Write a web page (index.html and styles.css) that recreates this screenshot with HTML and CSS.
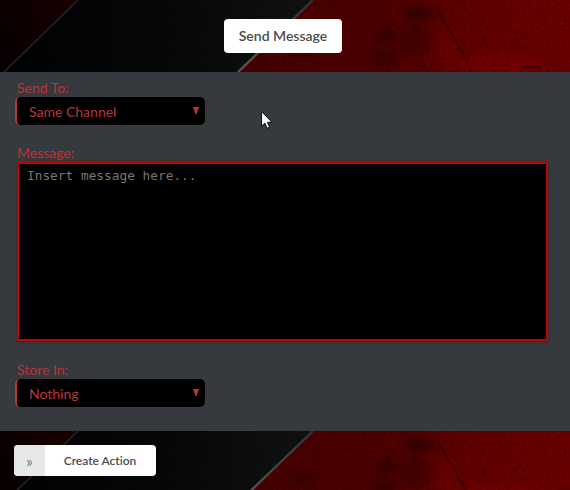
FILE: index.html
```html
<!DOCTYPE html>
<html lang="en">
<head>
<meta charset="utf-8">
<title>Send Message</title>
<link rel="stylesheet" href="styles.css">
</head>
<body>
<svg class="defs" aria-hidden="true">
  <defs>
    <linearGradient id="red" gradientUnits="userSpaceOnUse" x1="240" y1="0" x2="570" y2="30">
      <stop offset="0" stop-color="#460000"/><stop offset=".4" stop-color="#4e0000"/><stop offset=".75" stop-color="#640000"/><stop offset="1" stop-color="#6b0000"/>
    </linearGradient>
    <linearGradient id="dark" gradientUnits="userSpaceOnUse" x1="30" y1="0" x2="300" y2="0">
      <stop offset="0" stop-color="#020304"/><stop offset=".55" stop-color="#070808"/><stop offset="1" stop-color="#111"/>
    </linearGradient>
    <linearGradient id="maroon" gradientUnits="userSpaceOnUse" x1="0" y1="40" x2="70" y2="0">
      <stop offset="0" stop-color="#080000"/><stop offset="1" stop-color="#1b0000"/>
    </linearGradient>
    <linearGradient id="edge" x1="0" y1="1" x2="1" y2="0">
      <stop offset="0" stop-color="#555"/><stop offset="1" stop-color="#333"/>
    </linearGradient>
    <filter id="soft" x="-50%" y="-50%" width="200%" height="200%"><feGaussianBlur stdDeviation="3.5"/></filter>
    <filter id="grain" x="0" y="0" width="100%" height="100%">
      <feTurbulence type="fractalNoise" baseFrequency=".3" numOctaves="3" seed="8"/>
      <feColorMatrix values="0 0 0 0 0  0 0 0 0 0  0 0 0 0 0  1.2 0 0 0 -.5"/>
    </filter>
    <symbol id="backdrop" viewBox="0 0 570 72">
      <rect width="570" height="72" fill="url(#dark)"/>
      <path d="M0 0H78L4 72H0z" fill="url(#maroon)"/>
      <path d="M78 0L4 72" stroke="#252424" stroke-width="1.6"/>
      <path d="M313 0H570V72H238z" fill="url(#red)"/>
      <g filter="url(#soft)">
        <ellipse cx="418" cy="14" rx="16" ry="7" fill="#200" opacity=".65"/>
        <ellipse cx="386" cy="35" rx="9" ry="9" fill="#200" opacity=".55"/>
        <ellipse cx="385" cy="58" rx="14" ry="10" fill="#200" opacity=".35"/>
        <ellipse cx="412" cy="41" rx="17" ry="16" fill="#200" opacity=".3"/>
        <ellipse cx="302" cy="49" rx="12" ry="7" fill="#200" opacity=".3"/>
        <ellipse cx="498" cy="65" rx="43" ry="12" fill="#8b0000" opacity=".35"/>
        <ellipse cx="448" cy="50" rx="10" ry="22" fill="#7a0000" opacity=".4"/>
      </g>
      <path d="M438 8l2 7 6 10 8 12 7 14 8 14 2 7" fill="none" stroke="#240000" stroke-width="1.6" opacity=".55"/>
      <path d="M564 20l3 2M514 38l3 2M482 42l4-2M414 25l5 3M522 69q10-5 20 0M419 68l7-1" fill="none" stroke="#200" stroke-width="3" opacity=".5"/>
      <rect width="570" height="72" filter="url(#grain)" opacity=".4"/>
      <path d="M313 0L238 72" stroke="url(#edge)" stroke-width="2.4"/>
    </symbol>
  </defs>
</svg>
<main class="page">
  <header class="band band-top">
    <svg class="art" width="570" height="72" aria-hidden="true"><use href="#backdrop"/></svg>
    <button class="title">Send Message</button>
  </header>
  <form class="panel">
    <div class="field">
      <label class="label">Send To:</label>
      <div class="select"><span>Same Channel</span><i class="arrow"></i></div>
    </div>
    <div class="field field-message">
      <label class="label" for="message">Message:</label>
      <textarea class="message" id="message" placeholder="Insert message here..."></textarea>
    </div>
    <div class="field">
      <label class="label">Store In:</label>
      <div class="select"><span>Nothing</span><i class="arrow"></i></div>
    </div>
  </form>
  <footer class="band band-bottom">
    <svg class="art" width="570" height="72" aria-hidden="true"><use href="#backdrop"/></svg>
    <button class="create"><span class="create-icon">»</span><span class="create-text">Create Action</span></button>
  </footer>
  <svg class="cursor" width="14" height="21" viewBox="0 0 14 21" aria-hidden="true"><path d="M1.5 1.5V16.2L4.8 13.1L7 18.3L9.6 17.2L7.5 12.3H12z" fill="#fff" stroke="#08080c"/></svg>
</main>
</body>
</html>
```
FILE: styles.css
```css
* {
  box-sizing: border-box;
}

body {
  margin: 0;
  overflow: hidden;
  background: #36393e;
  font-family: Lato, sans-serif;
}

.defs {
  position: absolute;
  width: 0;
  height: 0;
}

.page {
  position: relative;
  width: 570px;
  height: 490px;
  display: flex;
  flex-direction: column;
}

.band {
  position: relative;
  display: flex;
  overflow: hidden;
  background: #080808;
}

.band-top {
  height: 72px;
  align-items: center;
  justify-content: center;
  padding-right: 4px;
}

.band-bottom {
  height: 59px;
  align-items: flex-start;
  padding: 14px;
}

.art {
  position: absolute;
  left: 0;
  top: 0;
}

.title,
.create {
  position: relative;
  border: 0;
  border-radius: 4px;
  background: #fff;
  color: #4c4c4c;
  font-family: Lato, sans-serif;
  font-variant-ligatures: none;
  padding: 0;
}

.title {
  width: 118px;
  height: 34px;
  padding-bottom: 2px;
  font-size: 14px;
  font-weight: 600;
}

.create {
  width: 142px;
  height: 31px;
  display: flex;
  overflow: hidden;
  font-size: 12px;
  font-weight: 600;
  line-height: 31px;
}

.create-icon {
  width: 31px;
  background: #e8e8e8;
  color: #777;
  font-size: 16px;
  font-weight: 400;
}

.create-text {
  flex: 1;
  padding-right: 1px;
}

.panel {
  height: 359px;
  padding: 8px 15px 0;
  color: #b93437;
  font-size: 14px;
}

.field {
  height: 65px;
}

.field-message {
  height: 217px;
}

.label {
  display: block;
  height: 17px;
  padding-left: 2px;
  line-height: 15px;
}

.select {
  width: 190px;
  height: 28px;
  display: flex;
  align-items: center;
  justify-content: space-between;
  padding: 0 6px 0 12px;
  border-left: 2px solid #b93437;
  border-radius: 5px;
  background: #000;
}

.arrow {
  width: 6px;
  height: 7px;
  margin-bottom: 1px;
  background: #b93437;
  clip-path: polygon(0 0, 100% 0, 60% 100%, 40% 100%);
}

.message {
  display: block;
  width: 531px;
  height: 179px;
  margin: 0 0 0 2px;
  padding: 3px 8px;
  border: 2px solid #c80000;
  border-radius: 2px;
  outline: 0;
  resize: none;
  background: #000;
  box-shadow: 0 1px 3px #0005;
  font: 12.8px/17px "DejaVu Sans Mono", monospace;
}

.message::placeholder {
  color: #757575;
}

.cursor {
  position: absolute;
  left: 260px;
  top: 110px;
}
```
